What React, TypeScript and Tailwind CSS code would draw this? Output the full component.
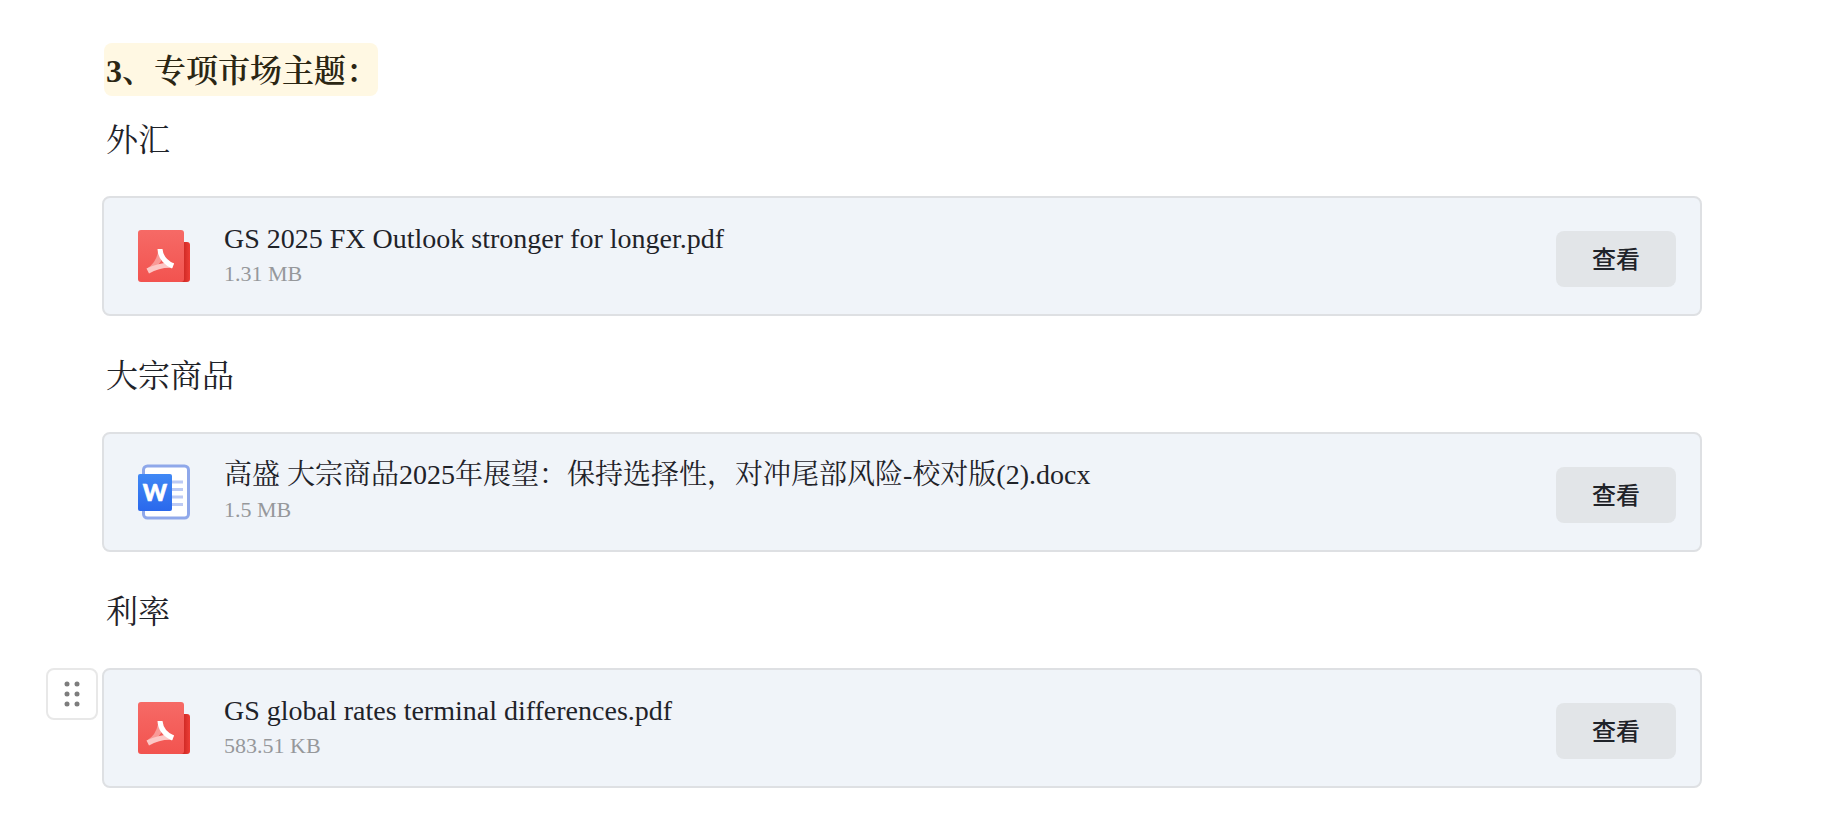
type FileKind = "pdf" | "word"

type FileSection = {
  topic: string
  kind: FileKind
  name: string
  size: string
  active?: boolean
}

const sections: FileSection[] = [
  {
    topic: "外汇",
    kind: "pdf",
    name: "GS 2025 FX Outlook stronger for longer.pdf",
    size: "1.31 MB",
  },
  {
    topic: "大宗商品",
    kind: "word",
    name: "高盛 大宗商品2025年展望：保持选择性，对冲尾部风险-校对版(2).docx",
    size: "1.5 MB",
  },
  {
    topic: "利率",
    kind: "pdf",
    name: "GS global rates terminal differences.pdf",
    size: "583.51 KB",
    active: true,
  },
]

const PdfIcon = () => (
  <svg viewBox="0 0 56 56" className="size-14 shrink-0" aria-hidden="true">
    <defs>
      <linearGradient id="pdf-front" x1="0" y1="0" x2="0" y2="1">
        <stop offset="0" stopColor="#f66a66" />
        <stop offset="1" stopColor="#f2534f" />
      </linearGradient>
      <linearGradient id="pdf-back" x1="0" y1="0" x2="1" y2="0">
        <stop offset="0.65" stopColor="#cf2a25" />
        <stop offset="1" stopColor="#ee3d36" />
      </linearGradient>
    </defs>
    <rect x="36" y="14" width="18" height="40" rx="3" fill="url(#pdf-back)" />
    <rect x="2" y="2" width="46" height="52" rx="3" fill="url(#pdf-front)" />
    <path d="M22 24 L27 29 Q24 37 15 43 L11 40.5 Q20 35 22 24Z" fill="#f99a97" />
    <path d="M10.5 40.5 Q24 34 38 35 L36.5 39.8 Q24 39 13 45.5Z" fill="#fcc8c6" />
    <path d="M21.5 21 H26.5 Q27.5 31 38 35.5 L36 40.5 Q22 34 21.5 21Z" fill="#ffffff" />
  </svg>
)

const WordIcon = () => (
  <svg viewBox="0 0 56 56" className="size-14 shrink-0" aria-hidden="true">
    <defs>
      <linearGradient id="word-front" x1="0" y1="0" x2="0" y2="1">
        <stop offset="0" stopColor="#4088f5" />
        <stop offset="1" stopColor="#2a68ec" />
      </linearGradient>
    </defs>
    <rect x="7.5" y="2" width="45" height="52" rx="4" fill="#ffffff" stroke="#8fa8ea" strokeWidth="3" />
    <path d="M36 18h11M36 25.5h11M36 33h11M36 40.5h11" stroke="#bccaf4" strokeWidth="3" />
    <rect x="2" y="10" width="34" height="37" rx="2" fill="url(#word-front)" />
    <text
      x="19"
      y="37"
      textAnchor="middle"
      fontSize="23"
      fill="#ffffff"
      stroke="#ffffff"
      strokeWidth="0.6"
      className="font-['Lato',sans-serif] font-black"
    >
      W
    </text>
  </svg>
)

const dots = [
  [19, 14],
  [29, 14],
  [19, 24],
  [29, 24],
  [19, 34],
  [29, 34],
]

const DragHandle = () => (
  <button
    type="button"
    aria-label="拖动"
    className="absolute top-0 -left-14 size-[52px] rounded-lg border-2 border-[#e8e8e8] bg-white"
  >
    <svg viewBox="0 0 48 48" className="size-12" aria-hidden="true">
      {dots.map(([x, y]) => (
        <circle key={`${x}-${y}`} cx={x} cy={y} r="2.5" fill="#7d7d7d" />
      ))}
    </svg>
  </button>
)

const FileCard = ({ file }: { file: FileSection }) => (
  <div className="relative">
    {file.active ? <DragHandle /> : null}
    <div className="flex h-[120px] items-center rounded-lg border-2 border-[#dee0e3] bg-[#f0f4f9] pr-6 pl-8">
      {file.kind === "pdf" ? <PdfIcon /> : <WordIcon />}
      <div className="ml-8 min-w-0 flex-1">
        <div className="truncate text-[28px] leading-9">{file.name}</div>
        <div className="text-[22px] leading-[34px] text-[#96989b]">{file.size}</div>
      </div>
      <button
        type="button"
        className="mt-1.5 h-14 w-[120px] shrink-0 rounded-lg bg-[#e2e5e8] pb-0.5 font-['Noto_Sans_CJK_SC',sans-serif] text-2xl font-medium"
      >
        查看
      </button>
    </div>
  </div>
)

const App = () => {
  return (
    <main className="min-h-screen bg-white pt-[43px] pr-[120px] pb-5 pl-[102px] font-['Liberation_Serif','Noto_Serif_CJK_SC','Noto_Sans_CJK_SC',serif] text-[#1f2329]">
      <h1 className="ml-0.5 flex text-[32px] leading-[49px] font-semibold text-[#2b2613]">
        <span className="rounded-lg bg-[#fff8e3] pt-1 pl-0.5">3、专项市场主题：</span>
      </h1>
      {sections.map((section) => (
        <section key={section.topic} className="mb-[30px] first-of-type:mt-[14px]">
          <h2 className="mb-[26px] pl-1 text-[32px] leading-[60px] font-normal">{section.topic}</h2>
          <FileCard file={section} />
        </section>
      ))}
    </main>
  )
}

export default App
